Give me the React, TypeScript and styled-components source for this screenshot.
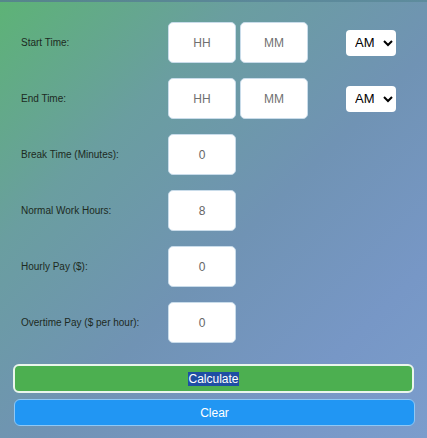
import React from "react";
import styled, { createGlobalStyle } from "styled-components";

const Global = createGlobalStyle`
  html, body { margin: 0; padding: 0; }
  body {
    width: 427px;
    height: 438px;
    overflow: hidden;
    font-family: "Liberation Sans", Arial, sans-serif;
    background: #7593bd;
  }
  * { box-sizing: border-box; }
`;

const Card = styled.div`
  width: 427px;
  height: 438px;
  background: linear-gradient(135deg, #5db376 0%, #6a9ea0 28%, #7093b4 55%, #7797c6 80%, #7b9dcc 100%);
  border-top: 2px solid rgba(40, 110, 70, 0.35);
  padding: 20px 13px 0 13px;
`;

const Form = styled.div`
  display: flex;
  flex-direction: column;
  gap: 15px;
  padding-left: 8px;
`;

const Row = styled.div`
  display: flex;
  align-items: center;
  height: 41px;
`;

const Label = styled.label`
  width: 147px;
  font-size: 10px;
  color: #1d2a22;
`;

const Inputs = styled.div`
  display: flex;
  gap: 4px;
`;

const Field = styled.input`
  width: 68px;
  height: 41px;
  border: 1px solid #c9dcea;
  border-radius: 5px;
  background: #fff;
  text-align: center;
  font-family: "Liberation Sans", Arial, sans-serif;
  font-size: 12px;
  color: #666;
  outline: none;
  &::placeholder { color: #707070; }
`;

const Select = styled.select`
  margin-left: 38px;
  width: 50px;
  height: 26px;
  border: none;
  border-radius: 4px;
  background: #fff;
  font-family: "Liberation Sans", Arial, sans-serif;
  font-size: 13px;
  color: #000;
  padding: 0 2px 0 5px;
`;

const Buttons = styled.div`
  display: flex;
  flex-direction: column;
  gap: 6px;
  margin-top: 21px;
`;

const Button = styled.button<{ $variant: "green" | "blue" }>`
  width: 401px;
  height: ${(p) => (p.$variant === "green" ? "29px" : "27px")};
  margin-left: ${(p) => (p.$variant === "green" ? "0" : "1px")};
  border-radius: 6px;
  border: ${(p) => (p.$variant === "green" ? "2px solid #eaf6ec" : "1px solid #8fc8f5")};
  background: ${(p) => (p.$variant === "green" ? "#4caf50" : "#2196f3")};
  color: #fff;
  font-family: "Liberation Sans", Arial, sans-serif;
  font-size: 12px;
  padding: 0;
  cursor: pointer;
`;

const Selected = styled.span`
  background: #1f4ea3;
  color: #fff;
`;

const simpleRows = [
  { label: "Break Time (Minutes):", value: "0" },
  { label: "Normal Work Hours:", value: "8" },
  { label: "Hourly Pay ($):", value: "0" },
  { label: "Overtime Pay ($ per hour):", value: "0" },
];

export default function App() {
  return (
    <>
      <Global />
      <Card>
        <Form>
          {["Start Time:", "End Time:"].map((l) => (
            <Row key={l}>
              <Label>{l}</Label>
              <Inputs>
                <Field placeholder="HH" />
                <Field placeholder="MM" />
              </Inputs>
              <Select defaultValue="AM">
                <option>AM</option>
                <option>PM</option>
              </Select>
            </Row>
          ))}
          {simpleRows.map((r) => (
            <Row key={r.label}>
              <Label>{r.label}</Label>
              <Field defaultValue={r.value} />
            </Row>
          ))}
        </Form>
        <Buttons>
          <Button $variant="green">
            <Selected>Calculate</Selected>
          </Button>
          <Button $variant="blue">Clear</Button>
        </Buttons>
      </Card>
    </>
  );
}
